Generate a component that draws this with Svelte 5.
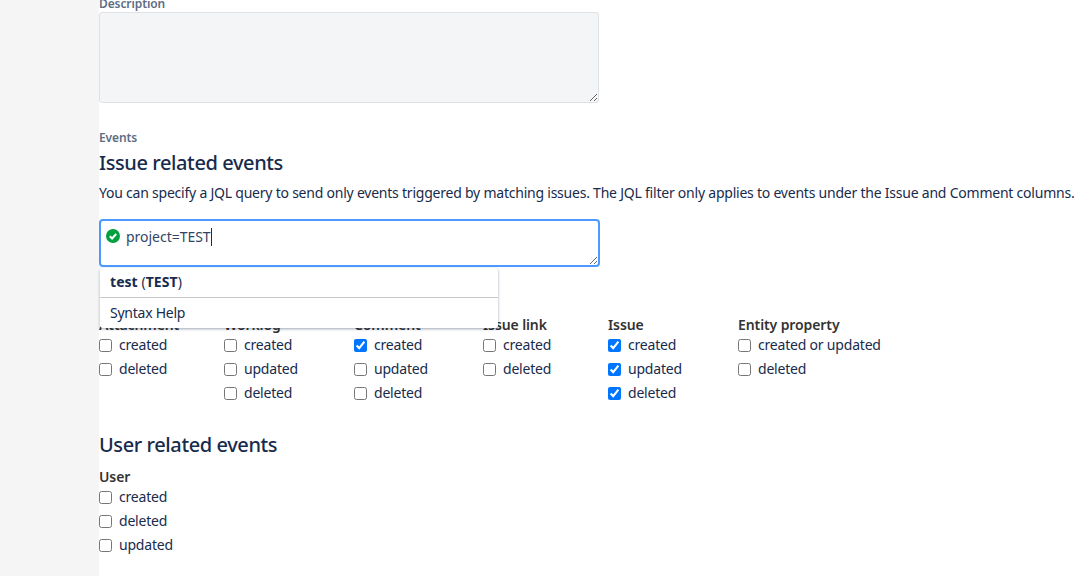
<script>
  const groups = [
    { name: 'Attachment', items: [['created', false], ['deleted', false]] },
    { name: 'Worklog', items: [['created', false], ['updated', false], ['deleted', false]] },
    { name: 'Comment', items: [['created', true], ['updated', false], ['deleted', false]] },
    { name: 'Issue link', items: [['created', false], ['deleted', false]] },
    { name: 'Issue', items: [['created', true], ['updated', true], ['deleted', true]] },
    { name: 'Entity property', items: [['created or updated', false], ['deleted', false]] }
  ];
  const userItems = ['created', 'deleted', 'updated'];
  const jql = 'project=TEST';
</script>

<div class="page">
  <aside class="side"></aside>
  <main class="content">
    <label class="field-label first" for="desc">Description</label>
    <textarea id="desc" class="desc"></textarea>

    <div class="field-label events">Events</div>
    <h2 class="h1st">Issue related events</h2>
    <p class="help">You can specify a JQL query to send only events triggered by matching issues. The JQL filter only applies to events under the Issue and Comment columns.</p>

    <div class="jql-wrap">
      <textarea class="jql" value={jql}></textarea>
      <svg class="ok" viewBox="0 0 14 14" width="14" height="14" aria-hidden="true">
        <circle cx="7" cy="7" r="7" fill="#00a03e" />
        <path d="M3.8 7.2 6.1 9.5 10.2 5" fill="none" stroke="#fff" stroke-width="2" />
      </svg>
      <span class="caret"></span>
      <div class="menu">
        <div class="menu-item top"><b>test</b> (<b>TEST</b>)</div>
        <div class="menu-item help-item">Syntax Help</div>
      </div>
    </div>

    <div class="groups">
      {#each groups as g}
        <div class="group">
          <div class="group-name">{g.name}</div>
          {#each g.items as [label, on]}
            <label class="check"><input type="checkbox" checked={on} /><span>{label}</span></label>
          {/each}
        </div>
      {/each}
    </div>

    <h2 class="h2nd">User related events</h2>
    <div class="group">
      <div class="group-name">User</div>
      {#each userItems as label}
        <label class="check"><input type="checkbox" /><span>{label}</span></label>
      {/each}
    </div>
  </main>
</div>

<style>
  :global(body) {
    margin: 0;
    background: #fff;
    overflow: hidden;
  }
  .page {
    display: flex;
    height: 576px;
    overflow: hidden;
    font-family: "Noto Sans", sans-serif;
    font-size: 14px;
    letter-spacing: -0.2px;
    color: #172b4d;
  }
  .side {
    width: 99px;
    flex: none;
    background: #f5f5f5;
  }
  .content {
    flex: 1;
    min-width: 0;
  }
  .field-label {
    display: block;
    font-size: 12px;
    font-weight: 600;
    line-height: 16px;
    letter-spacing: -0.1px;
    color: #5e6c84;
  }
  .first {
    margin-top: -4px;
  }
  .desc {
    display: block;
    box-sizing: border-box;
    width: 500px;
    height: 91px;
    margin: 0;
    padding: 8px;
    background: #f4f5f7;
    border: 1px solid #dfe1e6;
    border-radius: 3px;
    outline: none;
  }
  .events {
    margin-top: 27px;
  }
  h2 {
    margin: 0;
    font-size: 20px;
    font-weight: 500;
    line-height: 24px;
    letter-spacing: -0.4px;
    color: #172b4d;
  }
  .h1st {
    margin-top: 5px;
  }
  .help {
    margin: 8px 0 0;
    line-height: 20px;
    white-space: nowrap;
    letter-spacing: -0.225px;
  }
  .jql-wrap {
    position: relative;
    margin-top: 16px;
    height: 48px;
  }
  .jql {
    display: block;
    box-sizing: border-box;
    width: 501px;
    height: 48px;
    margin: 0;
    padding: 6px 5px 7px 25px;
    border: 2px solid #4c9aff;
    border-radius: 4px;
    outline: none;
    font: inherit;
    letter-spacing: -0.03px;
    line-height: 20px;
    color: #344563;
  }
  .ok {
    position: absolute;
    left: 7px;
    top: 10px;
  }
  .caret {
    position: absolute;
    left: 112px;
    top: 9px;
    width: 1px;
    height: 18px;
    background: #172b4d;
  }
  .menu {
    position: absolute;
    left: 1px;
    top: 49px;
    box-sizing: border-box;
    width: 398px;
    height: 60px;
    background: #fff;
    border-radius: 3px;
    box-shadow: 0 1px 3px rgba(9, 30, 66, 0.4);
    z-index: 2;
  }
  .menu-item {
    box-sizing: border-box;
    padding: 0 10px;
    height: 30px;
    line-height: 28px;
  }
  .menu-item.top {
    border-bottom: 1px solid #c8c8c8;
    letter-spacing: 0.05px;
  }
  .help-item {
    line-height: 30px;
    letter-spacing: -0.25px;
  }
  .groups {
    display: grid;
    grid-template-columns: 125px 130px 129px 125px 130px auto;
    margin-top: 50px;
  }
  .group-name {
    font-weight: 600;
    line-height: 15px;
    letter-spacing: -0.1px;
    color: #333;
  }
  .check {
    display: flex;
    align-items: center;
    height: 24px;
  }
  .check input {
    margin: 2px 7px 0 0;
    width: 13px;
    height: 13px;
  }
  .h2nd {
    margin-top: 29px;
  }
  .h2nd + .group {
    margin-top: 12px;
  }
</style>
